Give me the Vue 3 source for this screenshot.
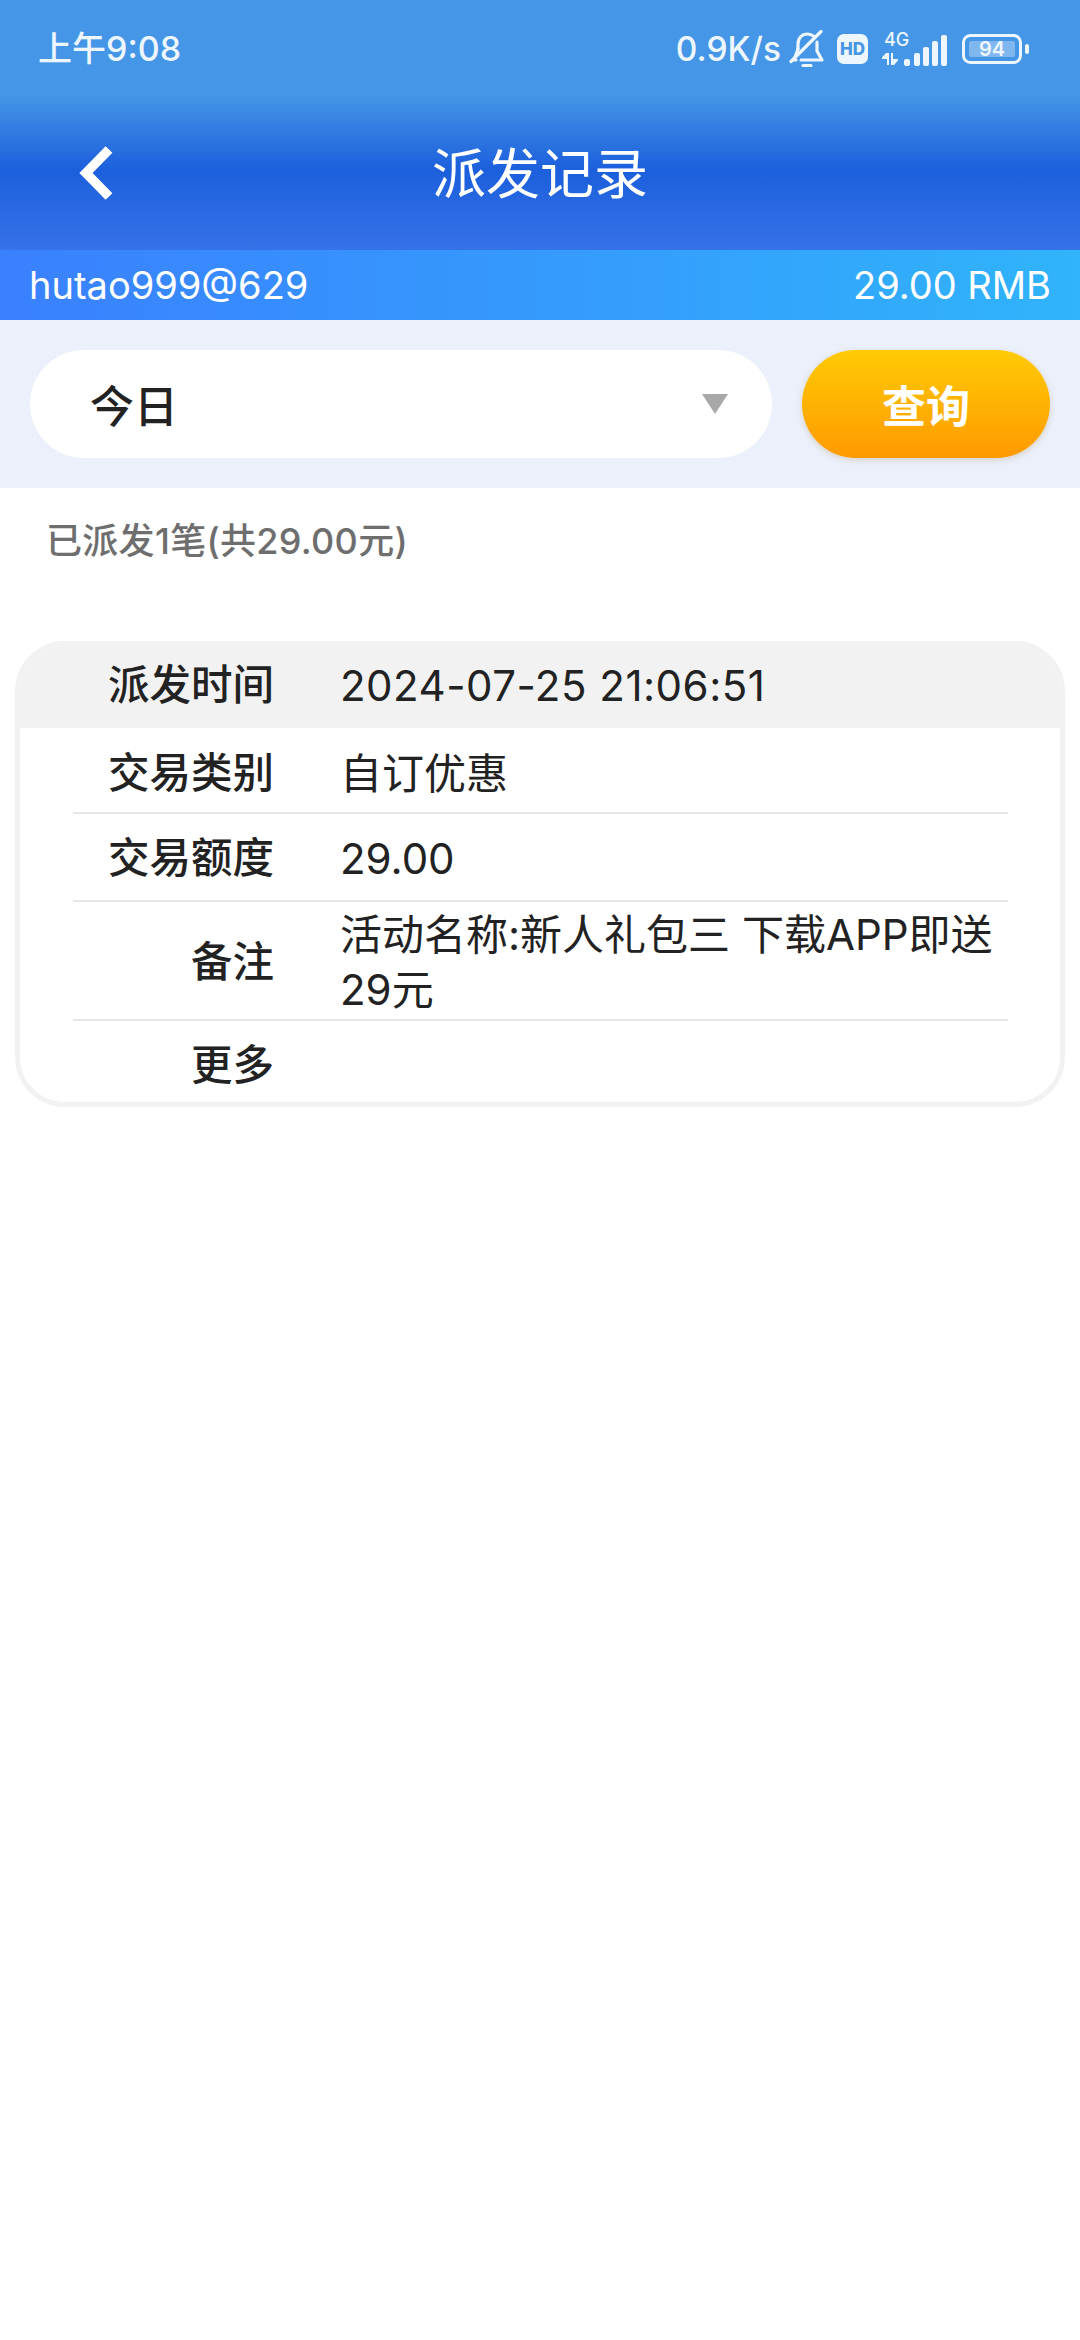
<script setup>
const rows = [
  { label: '交易类别', value: '自订优惠' },
  { label: '交易额度', value: '29.00' },
  { label: '备注', value: '活动名称:新人礼包三 下载APP即送29元' },
  { label: '更多', value: '' }
]
</script>

<template>
  <div class="page">
    <header class="top">
      <div class="status">
        <span class="time">上午9:08</span>
        <div class="status-right">
          <span class="speed">0.9K/s</span>
          <svg class="bell" width="36" height="38" viewBox="0 0 36 38" fill="none" stroke="#eef6fd" stroke-width="3.200" stroke-linecap="round" stroke-linejoin="round">
            <path d="M9 19V14C9 8 13 4 18.500 4C21 4 23 4.800 25 6.500" />
            <path d="M28 12V21L33 30H12" />
            <path d="M9 19L5 30H7" />
            <path d="M2 31.500L32 1.500" />
            <path d="M14 35.500H22" stroke-width="3.200" />
          </svg>
          <svg class="hd" width="31" height="30" viewBox="0 0 31 30">
            <rect width="31" height="30" rx="7" fill="#eef6fd" />
            <text x="15.500" y="20.500" text-anchor="middle" class="hd-text">HD</text>
          </svg>
          <svg class="signal" width="68" height="44" viewBox="0 -5 68 44" fill="#eef6fd">
            <text x="3" y="14" class="net-text">4G</text>
            <path d="M5 21H8V33H6V27H1V25.500Z" />
            <path d="M13 33H10V21H12V27H17V28.500Z" />
            <rect x="23" y="27" width="6" height="7" rx="2" />
            <rect x="33" y="21" width="6" height="13" rx="2" />
            <rect x="42" y="15" width="6" height="19" rx="2" />
            <rect x="51" y="9" width="6" height="25" rx="2" />
            <rect x="60" y="3" width="6" height="31" rx="2" />
          </svg>
          <svg class="battery" width="68" height="30" viewBox="0 0 68 30">
            <rect x="1.500" y="1.500" width="57" height="27" rx="7" fill="none" stroke="#eef6fd" stroke-width="3" />
            <rect x="7" y="7" width="46" height="16" rx="2" fill="#eef6fd" fill-opacity="0.35" />
            <rect x="63" y="10" width="4" height="10" rx="2" fill="#eef6fd" />
            <text x="30" y="22" text-anchor="middle" class="bat-text">94</text>
          </svg>
        </div>
      </div>
      <div class="nav">
        <svg class="back" width="34" height="54" viewBox="0 0 34 54" fill="none" stroke="#fff" stroke-width="9.500">
          <path d="M30 3.500L7 27L30 50.500" />
        </svg>
        <h1 class="title">派发记录</h1>
      </div>
    </header>

    <div class="account">
      <span>hutao999@629</span>
      <span>29.00 RMB</span>
    </div>

    <div class="filter">
      <div class="select">
        <span class="select-text">今日</span>
        <i class="arrow"></i>
      </div>
      <button class="query">查询</button>
    </div>

    <p class="count">已派发1笔(共29.00元)</p>

    <div class="card">
      <div class="row row-head">
        <span class="label">派发时间</span>
        <span class="value date">2024-07-25 21:06:51</span>
      </div>
      <div v-for="row in rows" :key="row.label" class="row">
        <span class="label">{{ row.label }}</span>
        <span class="value">{{ row.value }}</span>
      </div>
    </div>
  </div>
</template>

<style>
html,
body {
  margin: 0;
  background: #fff;
}
</style>

<style scoped>
.page {
  width: 1080px;
  height: 2340px;
  background: #fff;
  font-family: "Inter", "Noto Sans CJK SC", sans-serif;
  overflow: hidden;
}

.top {
  height: 250px;
  background: linear-gradient(180deg, #4596e6 0%, #4596e6 38%, #1c5fdc 68%, #3672e8 100%);
  color: #fff;
}

.status {
  height: 98px;
  box-sizing: border-box;
  padding: 0 50px 0 38px;
  display: flex;
  align-items: center;
  justify-content: space-between;
  color: #eef6fd;
}

.time {
  font-size: 34px;
  font-weight: 500;
  line-height: 40px;
}

.status-right {
  display: flex;
  align-items: center;
}

.speed {
  font-size: 33.500px;
  font-weight: 500;
  line-height: 40px;
  margin-right: 8px;
}

.bell {
  margin-right: 12px;
}

.hd {
  margin-right: 13px;
}

.hd-text {
  font: 800 17px "Inter", sans-serif;
  fill: #4596e6;
}

.net-text {
  font: 500 18px "Inter", sans-serif;
}

.signal {
  margin-right: 13px;
}

.bat-text {
  font: 600 20px "Inter", sans-serif;
  fill: #eef6fd;
}

.nav {
  position: relative;
  height: 152px;
  display: flex;
  align-items: center;
  justify-content: center;
}

.back {
  position: absolute;
  left: 79px;
  top: 48px;
}

.title {
  margin: 2px 0 0;
  font-size: 54px;
  font-weight: 400;
  line-height: 60px;
}

.account {
  height: 70px;
  box-sizing: border-box;
  padding: 0 29px;
  display: flex;
  align-items: center;
  justify-content: space-between;
  background: linear-gradient(90deg, #3a80ff 0%, #30b4fa 100%);
  color: #fff;
  font-size: 38px;
  line-height: 50px;
}

.filter {
  height: 168px;
  box-sizing: border-box;
  padding: 30px;
  display: flex;
  gap: 30px;
  background: #ebf0fb;
}

.select {
  flex: 1;
  border-radius: 54px;
  background: #fff;
  padding: 0 44px 0 60px;
  display: flex;
  align-items: center;
  justify-content: space-between;
}

.select-text {
  font-size: 44px;
  font-weight: 500;
  color: #222;
}

.arrow {
  width: 0;
  height: 0;
  border-left: 13px solid transparent;
  border-right: 13px solid transparent;
  border-top: 20px solid #a8a8a8;
}

.query {
  width: 248px;
  border: 0;
  padding: 0;
  border-radius: 54px;
  background: linear-gradient(180deg, #ffca05 0%, #ff9a00 100%);
  box-shadow: 0 2px 6px rgba(160, 120, 40, 0.25);
  color: #fff;
  font-family: inherit;
  font-size: 44px;
  font-weight: 700;
}

.count {
  margin: 0;
  padding: 31px 0 0 46px;
  font-size: 36px;
  font-weight: 500;
  line-height: 44px;
  letter-spacing: 0.300px;
  color: #6e6e6e;
}

.card {
  margin: 78px 15px 0;
  border: 5px solid #f2f2f2;
  border-radius: 50px;
  overflow: hidden;
  background: #fff;
}

.row {
  margin: 0 52px 0 53px;
  min-height: 88px;
  padding: 5px 0 2px;
  box-sizing: border-box;
  display: grid;
  grid-template-columns: 201px 1fr;
  column-gap: 66px;
  align-items: center;
  border-bottom: 2px solid #e6e6e6;
  font-size: 42px;
  line-height: 55px;
  color: #222;
}

.row:last-child {
  border-bottom: 0;
  min-height: 81px;
  padding: 7px 0 0;
}

.row-head {
  margin: 0;
  padding: 0 52px 4px 53px;
  min-height: 82px;
  background: #f2f2f2;
  border-bottom: 0;
}

.row-head + .row {
  min-height: 86px;
  padding-top: 7px;
  padding-bottom: 0;
}

.label {
  text-align: right;
  font-size: 41.500px;
  font-weight: 500;
}

.value {
  font-weight: 400;
}

.date {
  letter-spacing: 0.500px;
}
</style>
